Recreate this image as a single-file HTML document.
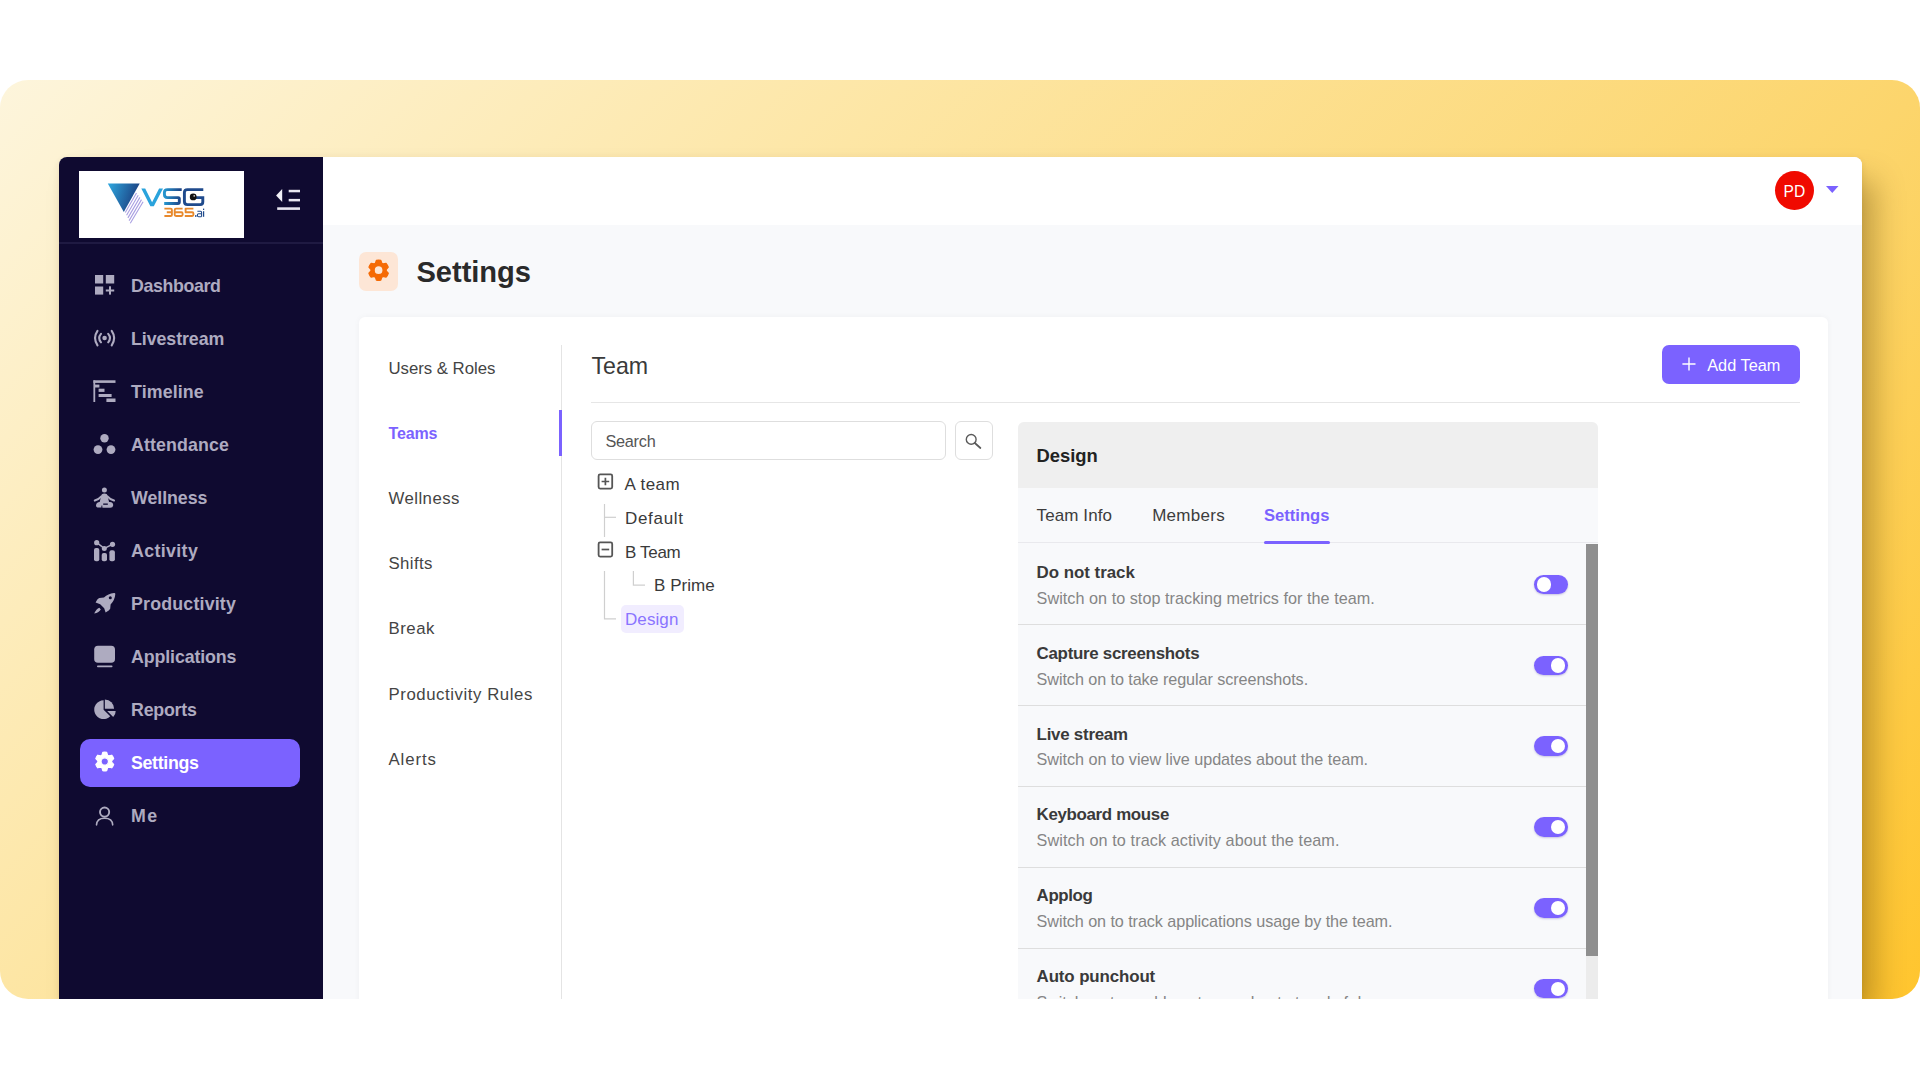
<!DOCTYPE html>
<html><head><meta charset="utf-8"><title>Settings</title>
<style>
html,body{margin:0;padding:0;}
body{width:1920px;height:1080px;overflow:hidden;background:#ffffff;position:relative;font-family:"Liberation Sans",sans-serif;}
.r{position:absolute;}
.t{position:absolute;white-space:nowrap;}
</style></head><body>
<div class="r" style="left:0px;top:80px;width:1920px;height:919px;border-radius:28px;background:linear-gradient(135deg,#fdf5dc 0%,#fde6a5 32%,#fcd56c 68%,#ffc52e 100%);"></div>
<div class="r" style="left:59px;top:157px;width:1803px;height:842px;border-radius:8px 8px 0 0;box-shadow:16px 20px 30px -4px rgba(90,60,0,0.38), 0px 2px 6px rgba(90,60,0,0.10);background:#f8f9fb;"></div>
<div class="r" style="left:59px;top:157px;width:264px;height:842px;border-radius:8px 0 0 0;background:#0f0a30;"></div>
<div class="r" style="left:323px;top:157px;width:1539px;height:68px;border-radius:0 8px 0 0;background:#ffffff;"></div>
<div class="r" style="left:323px;top:225px;width:1539px;height:774px;background:#f8f9fb;"></div>
<div class="r" style="left:79px;top:171px;width:165px;height:67px;background:#ffffff;"></div>
<div class="r" style="left:59px;top:242px;width:264px;height:2px;background:#1f1a42;"></div>
<svg class="r" style="left:100px;top:175px;width:120px;height:55px" viewBox="100 175 120 55">
<defs>
<linearGradient id="tri" x1="0" y1="0" x2="1" y2="0.3"><stop offset="0" stop-color="#2fa8e0"/><stop offset="1" stop-color="#1b3f80"/></linearGradient>
<linearGradient id="sg" x1="0" y1="0" x2="1" y2="0"><stop offset="0" stop-color="#2596cf"/><stop offset="1" stop-color="#1d3f82"/></linearGradient>
</defs>
<polygon points="107.8,183.4 139.7,183.4 123.8,211.9" fill="url(#tri)"/>
<g stroke="#a99fe2" stroke-width="1.1">
<line x1="136.5" y1="193" x2="125.3" y2="212.5"/>
<line x1="138.2" y1="195.2" x2="126.6" y2="215.2"/>
<line x1="139.9" y1="197.4" x2="127.9" y2="217.9"/>
<line x1="141.5" y1="199.6" x2="129.1" y2="220.6"/>
<line x1="143.1" y1="201.8" x2="130.3" y2="223.3"/>
</g>
<polygon points="141.3,188.4 145.2,188.4 152.1,202.3 159.1,188.4 163,188.4 153.8,206.2 150.4,206.2" fill="#2aa3dc"/>
<path d="M181.7,189.6 H167.5 Q164.4,189.6 164.4,192.5 V194.6 Q164.4,197.6 167.5,197.6 H178.2 Q179.3,197.6 179.3,198.7 V201.9 Q179.3,203.5 177.8,203.5 H164.2" fill="none" stroke="url(#sg)" stroke-width="2.9"/>
<path d="M203.3,189.6 H187.5 Q184.4,189.6 184.4,192.5 V201.5 Q184.4,204.6 187.5,204.6 H200.3 Q202.8,204.6 202.8,202 V197.6 H195" fill="none" stroke="#1f4a8c" stroke-width="2.9"/>
<circle cx="193.2" cy="196.9" r="3.4" fill="#111"/>
<circle cx="194.2" cy="195.9" r="0.8" fill="#ddd"/>
<g fill="none" stroke="#e8892c" stroke-width="1.9" stroke-linejoin="round">
<path d="M164.4,208.6 H170.6 Q171.9,208.6 171.9,209.9 V214.9 Q171.9,216 170.6,216 H164.4 M166.8,212.3 H171.6"/>
<path d="M182.6,208.6 H176 Q174.7,208.6 174.7,209.9 V214.8 Q174.7,216 176,216 H181.4 Q182.6,216 182.6,214.8 V213.5 Q182.6,212.3 181.4,212.3 H175"/>
<path d="M193.4,208.6 H185.6 V212.3 H192.2 Q193.4,212.3 193.4,213.5 V214.8 Q193.4,216 192.2,216 H184.8"/>
</g>
<rect x="195" y="215.2" width="1.5" height="1.6" fill="#1f4a8c"/>
<path d="M197.4,211.2 H200.6 Q201.6,211.2 201.6,212.2 V216.8 M201.4,213.7 H198.6 Q197.4,213.7 197.4,214.9 V215.6 Q197.4,216.8 198.6,216.8 H201.4" fill="none" stroke="#1f4a8c" stroke-width="1.1"/>
<rect x="203" y="211.2" width="1.2" height="5.6" fill="#1f4a8c"/>
<rect x="203" y="208.6" width="1.2" height="1.4" fill="#1f4a8c"/>
</svg>
<svg class="r" style="left:270px;top:185px;width:35px;height:30px" viewBox="270 185 35 30">
<polygon points="276.1,195.6 282.2,189.1 282.2,201.9" fill="#f2f1f7"/>
<rect x="288.7" y="189.8" width="11.3" height="2.5" fill="#e8e6f0"/>
<rect x="288.7" y="198.9" width="11.3" height="2.5" fill="#e8e6f0"/>
<rect x="277.2" y="207.3" width="22.8" height="2.6" fill="#e8e6f0"/>
</svg>
<div class="r" style="left:80px;top:739px;width:220px;height:48px;border-radius:10px;background:#7b62ff;"></div>
<div class="t" style="left:131.00px;top:277.93px;font-size:17.8px;line-height:17.8px;color:#aeabc0;font-weight:700;letter-spacing:-0.376px;">Dashboard</div>
<div class="t" style="left:131.00px;top:330.98px;font-size:17.8px;line-height:17.8px;color:#aeabc0;font-weight:700;letter-spacing:-0.065px;">Livestream</div>
<div class="t" style="left:131.00px;top:384.03px;font-size:17.8px;line-height:17.8px;color:#aeabc0;font-weight:700;letter-spacing:0.113px;">Timeline</div>
<div class="t" style="left:131.00px;top:437.08px;font-size:17.8px;line-height:17.8px;color:#aeabc0;font-weight:700;letter-spacing:0.120px;">Attendance</div>
<div class="t" style="left:131.00px;top:490.13px;font-size:17.8px;line-height:17.8px;color:#aeabc0;font-weight:700;letter-spacing:-0.044px;">Wellness</div>
<div class="t" style="left:131.00px;top:543.18px;font-size:17.8px;line-height:17.8px;color:#aeabc0;font-weight:700;letter-spacing:0.363px;">Activity</div>
<div class="t" style="left:131.00px;top:596.23px;font-size:17.8px;line-height:17.8px;color:#aeabc0;font-weight:700;letter-spacing:0.192px;">Productivity</div>
<div class="t" style="left:131.00px;top:649.28px;font-size:17.8px;line-height:17.8px;color:#aeabc0;font-weight:700;letter-spacing:-0.109px;">Applications</div>
<div class="t" style="left:131.00px;top:702.33px;font-size:17.8px;line-height:17.8px;color:#aeabc0;font-weight:700;letter-spacing:-0.214px;">Reports</div>
<div class="t" style="left:131.00px;top:755.38px;font-size:17.8px;line-height:17.8px;color:#ffffff;font-weight:700;letter-spacing:-0.317px;">Settings</div>
<div class="t" style="left:131.00px;top:808.43px;font-size:17.8px;line-height:17.8px;color:#aeabc0;font-weight:700;letter-spacing:1.458px;">Me</div>
<svg class="r" style="left:85px;top:265px;width:40px;height:570px" viewBox="85 265 40 570">
<g fill="#aeabc0">
<!-- dashboard -->
<rect x="95" y="275" width="8.2" height="8.5"/>
<rect x="105.8" y="275" width="8.4" height="8.5"/>
<rect x="95" y="286.5" width="8.2" height="8.1"/>
<rect x="105.8" y="289.5" width="8.4" height="2"/>
<rect x="109" y="286.3" width="2" height="8.3"/>
<!-- livestream -->
<circle cx="104.6" cy="338.05" r="2.3"/>
</g>
<g fill="none" stroke="#aeabc0" stroke-width="2.1" stroke-linecap="round">
<path d="M101,333.9 Q97.4,338 101,342.3"/>
<path d="M108.2,333.9 Q111.8,338 108.2,342.3"/>
<path d="M97.5,330.9 Q92.6,338 97.5,345.3"/>
<path d="M111.7,330.9 Q116.6,338 111.7,345.3"/>
</g>
<g fill="#aeabc0">
<!-- timeline -->
<rect x="93.4" y="380.3" width="22.1" height="2.6"/>
<rect x="93.4" y="380.3" width="1.8" height="21.7"/>
<rect x="94.8" y="384.6" width="4.6" height="2.9"/>
<rect x="98.6" y="388.7" width="5.9" height="3.2"/>
<rect x="98.6" y="394" width="13" height="3"/>
<rect x="106.4" y="398.5" width="9.1" height="3.5"/>
<!-- attendance -->
<circle cx="104.5" cy="438.3" r="4.2"/>
<circle cx="98" cy="449.6" r="4.4"/>
<circle cx="111" cy="449.6" r="4.4"/>
<!-- wellness -->
<circle cx="104.4" cy="490" r="2.5"/>
<path d="M101.8,494.2 Q104.4,493 107,494.2 L108.4,499.2 L109.2,502.6 H99.6 L100.4,499.2 Z"/>
<path d="M99,502 H109.8 Q113.4,502.4 113.2,505.4 Q112.9,507.8 110.2,507.8 H102.4 V507.6 H98.6 Q95.9,507.6 96,505 Q96.3,502.4 99,502 Z"/>
</g>
<rect x="103.2" y="503.5" width="4.6" height="1.3" fill="#0f0a30"/>
<rect x="101.4" y="505.6" width="0.9" height="2.4" fill="#0f0a30"/>
<g fill="none" stroke="#aeabc0" stroke-width="2.1" stroke-linecap="round">
<path d="M101.4,496.4 Q98.6,499.6 94.8,500.6"/>
<path d="M107.4,496.4 Q110.2,499.6 114,500.6"/>
</g>
<g fill="#aeabc0">
<!-- activity -->
<rect x="94" y="548" width="5.3" height="13.3" rx="2"/>
<rect x="101.7" y="553" width="5.3" height="8.3" rx="2"/>
<rect x="109.4" y="550.3" width="5.5" height="11" rx="2"/>
<circle cx="96.7" cy="542.7" r="2.6"/>
<circle cx="104.3" cy="548.4" r="2.5"/>
<circle cx="112.5" cy="544.3" r="2.6"/>
</g>
<path d="M96.7,542.7 L104.3,548.4 L112.5,544.3" fill="none" stroke="#aeabc0" stroke-width="1.5"/>
<g fill="#aeabc0">
<!-- productivity rocket -->
<path d="M115.3,594.2 Q115.5,592.8 114,592.9 Q108,593.4 104,597.6 L99.4,598 Q97.6,598.4 95.6,602.6 L100.2,604.2 L104.2,608.2 L105.6,612.4 Q109.6,610.6 110.2,608.8 L110.6,604.4 Q114.8,600.2 115.3,594.2 Z"/>
<path d="M99.4,607.8 Q96.2,608.8 94.2,613.6 Q99.2,612.2 100.8,609.4 Z"/>
</g>
<circle cx="110.3" cy="597.8" r="1.5" fill="#0f0a30"/>
<g fill="#aeabc0">
<!-- applications -->
<rect x="94.2" y="645.7" width="20.8" height="17.1" rx="3.8"/>
<rect x="97" y="665.6" width="15.5" height="1.7" rx="0.8"/>
<!-- reports -->
<path d="M103.6,700.3 A9.4,9.4 0 1 0 110.25,716.35 L103.6,709.7 Z"/>
<path d="M104.9,708.7 V699.5 A9.2,9.2 0 0 1 114.1,708.7 Z"/>
<path d="M107.2,711.1 H115.7 A8.5,8.5 0 0 1 113.2,717.1 Z"/>
</g>
<!-- settings gear white -->
<g transform="translate(104.75,761.5)">
<path fill="#ffffff" stroke="#ffffff" stroke-width="1.2" stroke-linejoin="round" fill-rule="evenodd" d="M2.80,-6.31 L1.95,-9.20 A9.4,9.4 0 0 0 -1.95,-9.20 L-2.80,-6.31 A6.9,6.9 0 0 0 -4.06,-5.58 L-6.99,-6.29 A9.4,9.4 0 0 0 -8.94,-2.91 L-6.86,-0.73 A6.9,6.9 0 0 0 -6.86,0.73 L-8.94,2.91 A9.4,9.4 0 0 0 -6.99,6.29 L-4.06,5.58 A6.9,6.9 0 0 0 -2.80,6.31 L-1.95,9.20 A9.4,9.4 0 0 0 1.95,9.20 L2.80,6.31 A6.9,6.9 0 0 0 4.06,5.58 L6.99,6.29 A9.4,9.4 0 0 0 8.94,2.91 L6.86,0.73 A6.9,6.9 0 0 0 6.86,-0.73 L8.94,-2.91 A9.4,9.4 0 0 0 6.99,-6.29 L4.06,-5.58 A6.9,6.9 0 0 0 2.80,-6.31 Z M3.7,0 A3.7,3.7 0 1 0 -3.7,0 A3.7,3.7 0 1 0 3.7,0 Z"/>
</g>
<!-- me -->
<circle cx="104.6" cy="812.1" r="4.6" fill="none" stroke="#aeabc0" stroke-width="1.9"/>
<path d="M96.5,824.9 Q96.8,818.2 104.6,818.2 Q112.4,818.2 112.7,824.9" fill="none" stroke="#aeabc0" stroke-width="1.6" stroke-linecap="round"/>
</svg>
<div class="r" style="left:1775.4px;top:171.3px;width:38.8px;height:38.8px;border-radius:50%;background:#f00a00;"></div>
<div class="t" style="left:1783.60px;top:183.79px;font-size:15.6px;line-height:15.6px;color:#ffffff;">PD</div>
<svg class="r" style="left:1820px;top:180px;width:25px;height:20px" viewBox="1820 180 25 20"><polygon points="1826,186 1838.5,186 1832.25,193" fill="#7b62ff"/></svg>
<div class="r" style="left:359px;top:252px;width:39px;height:39px;border-radius:7px;background:#fde6d6;"></div>
<svg class="r" style="left:360px;top:252px;width:38px;height:40px" viewBox="-18.6 -18.2 38 40"><path fill="#f56a05" stroke="#f56a05" stroke-width="1.3" stroke-linejoin="round" fill-rule="evenodd" d="M3.20,-6.89 L2.20,-9.86 A10.1,10.1 0 0 0 -2.20,-9.86 L-3.20,-6.89 A7.6,7.6 0 0 0 -4.37,-6.22 L-7.44,-6.83 A10.1,10.1 0 0 0 -9.64,-3.02 L-7.57,-0.68 A7.6,7.6 0 0 0 -7.57,0.68 L-9.64,3.02 A10.1,10.1 0 0 0 -7.44,6.83 L-4.37,6.22 A7.6,7.6 0 0 0 -3.20,6.89 L-2.20,9.86 A10.1,10.1 0 0 0 2.20,9.86 L3.20,6.89 A7.6,7.6 0 0 0 4.37,6.22 L7.44,6.83 A10.1,10.1 0 0 0 9.64,3.02 L7.57,0.68 A7.6,7.6 0 0 0 7.57,-0.68 L9.64,-3.02 A10.1,10.1 0 0 0 7.44,-6.83 L4.37,-6.22 A7.6,7.6 0 0 0 3.20,-6.89 Z M4.5,0 A4.5,4.5 0 1 0 -4.5,0 A4.5,4.5 0 1 0 4.5,0 Z"/></svg>
<div class="t" style="left:416.50px;top:257.57px;font-size:29.1px;line-height:29.1px;color:#2a2a2a;font-weight:700;letter-spacing:-0.043px;">Settings</div>
<div class="r" style="left:359px;top:317px;width:1469px;height:783px;border-radius:6px;background:#ffffff;box-shadow:0 0 6px rgba(0,0,0,0.04);"></div>
<div class="t" style="left:388.50px;top:360.68px;font-size:16.8px;line-height:16.8px;color:#444444;letter-spacing:-0.029px;">Users &amp; Roles</div>
<div class="t" style="left:388.50px;top:425.66px;font-size:16px;line-height:16px;color:#7b62ff;font-weight:700;letter-spacing:-0.130px;">Teams</div>
<div class="t" style="left:388.50px;top:491.08px;font-size:16.8px;line-height:16.8px;color:#444444;letter-spacing:0.447px;">Wellness</div>
<div class="t" style="left:388.50px;top:556.28px;font-size:16.8px;line-height:16.8px;color:#444444;letter-spacing:0.400px;">Shifts</div>
<div class="t" style="left:388.50px;top:621.48px;font-size:16.8px;line-height:16.8px;color:#444444;letter-spacing:0.517px;">Break</div>
<div class="t" style="left:388.50px;top:686.68px;font-size:16.8px;line-height:16.8px;color:#444444;letter-spacing:0.560px;">Productivity Rules</div>
<div class="t" style="left:388.50px;top:751.88px;font-size:16.8px;line-height:16.8px;color:#444444;letter-spacing:0.915px;">Alerts</div>
<div class="r" style="left:561px;top:345px;width:1px;height:755px;background:#e4e4e4;"></div>
<div class="r" style="left:559px;top:410px;width:3px;height:46px;background:#7b62ff;"></div>
<div class="t" style="left:591.50px;top:354.56px;font-size:23.2px;line-height:23.2px;color:#3a3a3a;letter-spacing:-0.008px;">Team</div>
<div class="r" style="left:591px;top:402px;width:1209px;height:1px;background:#e6e6e6;"></div>
<div class="r" style="left:1662px;top:345px;width:138px;height:39px;border-radius:7px;background:#7b62ff;"></div>
<svg class="r" style="left:1680px;top:355px;width:18px;height:18px" viewBox="1680 355 18 18"><path d="M1689,357.4 V370.5 M1682.4,363.95 H1695.5" stroke="#fff" stroke-width="1.4"/></svg>
<div class="t" style="left:1707.20px;top:357.20px;font-size:16.3px;line-height:16.3px;color:#ffffff;letter-spacing:0.028px;">Add Team</div>
<div class="r" style="left:591px;top:421px;width:355px;height:39px;box-sizing:border-box;border:1.5px solid #dedede;border-radius:6px;background:#fff;"></div>
<div class="t" style="left:605.40px;top:433.20px;font-size:16.3px;line-height:16.3px;color:#555555;letter-spacing:-0.254px;">Search</div>
<div class="r" style="left:955px;top:421px;width:38px;height:39px;box-sizing:border-box;border:1.5px solid #dedede;border-radius:6px;background:#fff;"></div>
<svg class="r" style="left:960px;top:428px;width:26px;height:26px" viewBox="960 428 26 26"><circle cx="971.2" cy="439.4" r="4.9" fill="none" stroke="#5a5a5a" stroke-width="1.4"/><path d="M974.8,443 L980.4,448" stroke="#5a5a5a" stroke-width="1.7" stroke-linecap="round"/></svg>
<div class="t" style="left:624.60px;top:476.01px;font-size:17px;line-height:17px;color:#3a3a3a;letter-spacing:0.409px;">A team</div>
<div class="t" style="left:625.00px;top:509.91px;font-size:17px;line-height:17px;color:#3a3a3a;letter-spacing:0.685px;">Default</div>
<div class="t" style="left:625.00px;top:543.61px;font-size:17px;line-height:17px;color:#3a3a3a;letter-spacing:-0.318px;">B Team</div>
<div class="t" style="left:654.00px;top:577.31px;font-size:17px;line-height:17px;color:#3a3a3a;letter-spacing:0.044px;">B Prime</div>
<div class="r" style="left:620.5px;top:605px;width:63.5px;height:28px;border-radius:5px;background:#f1edff;"></div>
<div class="t" style="left:625.00px;top:610.61px;font-size:17px;line-height:17px;color:#8a74ff;letter-spacing:0.089px;">Design</div>
<svg class="r" style="left:590px;top:465px;width:60px;height:170px" viewBox="590 465 60 170">
<rect x="598.6" y="474.4" width="13.6" height="14.2" rx="1.5" fill="none" stroke="#555" stroke-width="1.8"/>
<path d="M601.6,481.5 H609.2 M605.4,477.7 V485.3" stroke="#555" stroke-width="1.7"/>
<rect x="598.6" y="542.4" width="13.6" height="14.2" rx="1.5" fill="none" stroke="#555" stroke-width="1.8"/>
<path d="M601.6,549.5 H609.2" stroke="#555" stroke-width="1.7"/>
<g stroke="#cfcfcf" stroke-width="1.2" fill="none">
<path d="M604.5,504 V537"/>
<path d="M604.5,517.3 H616"/>
<path d="M604.5,571 V618.8 H616"/>
<path d="M633.4,571 V585.2 H645"/>
</g>
</svg>
<div class="r" style="left:1018px;top:421.5px;width:580px;height:678.5px;border-radius:6px 6px 0 0;background:#f8f9fb;"></div>
<div class="r" style="left:1018px;top:421.5px;width:580px;height:66.0px;border-radius:6px 6px 0 0;background:#efefef;"></div>
<div class="t" style="left:1036.60px;top:446.62px;font-size:18.4px;line-height:18.4px;color:#222222;font-weight:700;letter-spacing:-0.033px;">Design</div>
<div class="t" style="left:1036.60px;top:507.11px;font-size:17px;line-height:17px;color:#3d3d3d;letter-spacing:0.096px;">Team Info</div>
<div class="t" style="left:1152.20px;top:507.11px;font-size:17px;line-height:17px;color:#3d3d3d;letter-spacing:0.268px;">Members</div>
<div class="t" style="left:1264.00px;top:508.25px;font-size:16.6px;line-height:16.6px;color:#7b62ff;font-weight:700;letter-spacing:-0.012px;">Settings</div>
<div class="r" style="left:1018px;top:542px;width:580px;height:1.2000000000000455px;background:#e9e9ed;"></div>
<div class="r" style="left:1264px;top:540.6px;width:66px;height:3.199999999999932px;border-radius:2px;background:#7b62ff;"></div>
<div class="r" style="left:1586.3px;top:544px;width:11.700000000000045px;height:556px;background:#ececec;"></div>
<div class="r" style="left:1586.3px;top:544px;width:11.700000000000045px;height:412.29999999999995px;background:#8f8f8f;"></div>
<div class="t" style="left:1036.60px;top:564.89px;font-size:16.9px;line-height:16.9px;color:#3a3a3a;font-weight:700;letter-spacing:-0.027px;">Do not track</div>
<div class="t" style="left:1036.60px;top:589.79px;font-size:16.2px;line-height:16.2px;color:#858585;letter-spacing:0.036px;">Switch on to stop tracking metrics for the team.</div>
<div class="r" style="left:1018px;top:624px;width:568.3px;height:1.2000000000000455px;background:#dedede;"></div>
<div class="r" style="left:1534.2px;top:574.7px;width:33.799999999999955px;height:19.5px;border-radius:10px;background:#7b62ff;box-shadow:0 1px 2px rgba(60,40,160,0.25);"></div>
<div class="r" style="left:1536.6px;top:577.3000000000001px;width:14.400000000000091px;height:14.399999999999977px;border-radius:50%;background:#ffffff;"></div>
<div class="t" style="left:1036.60px;top:645.74px;font-size:16.9px;line-height:16.9px;color:#3a3a3a;font-weight:700;letter-spacing:-0.281px;">Capture screenshots</div>
<div class="t" style="left:1036.60px;top:670.64px;font-size:16.2px;line-height:16.2px;color:#858585;letter-spacing:-0.078px;">Switch on to take regular screenshots.</div>
<div class="r" style="left:1018px;top:705px;width:568.3px;height:1.2000000000000455px;background:#dedede;"></div>
<div class="r" style="left:1534.2px;top:655.5500000000001px;width:33.799999999999955px;height:19.5px;border-radius:10px;background:#7b62ff;box-shadow:0 1px 2px rgba(60,40,160,0.25);"></div>
<div class="r" style="left:1551px;top:658.1500000000001px;width:14.400000000000091px;height:14.399999999999977px;border-radius:50%;background:#ffffff;"></div>
<div class="t" style="left:1036.60px;top:726.59px;font-size:16.9px;line-height:16.9px;color:#3a3a3a;font-weight:700;letter-spacing:-0.246px;">Live stream</div>
<div class="t" style="left:1036.60px;top:751.49px;font-size:16.2px;line-height:16.2px;color:#858585;letter-spacing:-0.032px;">Switch on to view live updates about the team.</div>
<div class="r" style="left:1018px;top:786px;width:568.3px;height:1.2000000000000455px;background:#dedede;"></div>
<div class="r" style="left:1534.2px;top:736.4000000000001px;width:33.799999999999955px;height:19.5px;border-radius:10px;background:#7b62ff;box-shadow:0 1px 2px rgba(60,40,160,0.25);"></div>
<div class="r" style="left:1551px;top:739.0000000000001px;width:14.400000000000091px;height:14.399999999999977px;border-radius:50%;background:#ffffff;"></div>
<div class="t" style="left:1036.60px;top:807.44px;font-size:16.9px;line-height:16.9px;color:#3a3a3a;font-weight:700;letter-spacing:-0.334px;">Keyboard mouse</div>
<div class="t" style="left:1036.60px;top:832.34px;font-size:16.2px;line-height:16.2px;color:#858585;letter-spacing:0.098px;">Switch on to track activity about the team.</div>
<div class="r" style="left:1018px;top:867px;width:568.3px;height:1.2000000000000455px;background:#dedede;"></div>
<div class="r" style="left:1534.2px;top:817.25px;width:33.799999999999955px;height:19.5px;border-radius:10px;background:#7b62ff;box-shadow:0 1px 2px rgba(60,40,160,0.25);"></div>
<div class="r" style="left:1551px;top:819.85px;width:14.400000000000091px;height:14.399999999999977px;border-radius:50%;background:#ffffff;"></div>
<div class="t" style="left:1036.60px;top:888.29px;font-size:16.9px;line-height:16.9px;color:#3a3a3a;font-weight:700;letter-spacing:-0.404px;">Applog</div>
<div class="t" style="left:1036.60px;top:913.19px;font-size:16.2px;line-height:16.2px;color:#858585;letter-spacing:-0.082px;">Switch on to track applications usage by the team.</div>
<div class="r" style="left:1018px;top:948px;width:568.3px;height:1.2000000000000455px;background:#dedede;"></div>
<div class="r" style="left:1534.2px;top:898.1px;width:33.799999999999955px;height:19.5px;border-radius:10px;background:#7b62ff;box-shadow:0 1px 2px rgba(60,40,160,0.25);"></div>
<div class="r" style="left:1551px;top:900.7px;width:14.400000000000091px;height:14.399999999999977px;border-radius:50%;background:#ffffff;"></div>
<div class="t" style="left:1036.60px;top:969.14px;font-size:16.9px;line-height:16.9px;color:#3a3a3a;font-weight:700;letter-spacing:-0.122px;">Auto punchout</div>
<div class="t" style="left:1036.60px;top:994.04px;font-size:16.2px;line-height:16.2px;color:#858585;letter-spacing:-0.127px;">Switch on to enable auto-punchout at end of day.</div>
<div class="r" style="left:1534.2px;top:978.95px;width:33.799999999999955px;height:19.5px;border-radius:10px;background:#7b62ff;box-shadow:0 1px 2px rgba(60,40,160,0.25);"></div>
<div class="r" style="left:1551px;top:981.5500000000001px;width:14.400000000000091px;height:14.399999999999977px;border-radius:50%;background:#ffffff;"></div>
<div class="r" style="left:0px;top:999px;width:1920px;height:81px;background:#ffffff;"></div>
</body></html>
